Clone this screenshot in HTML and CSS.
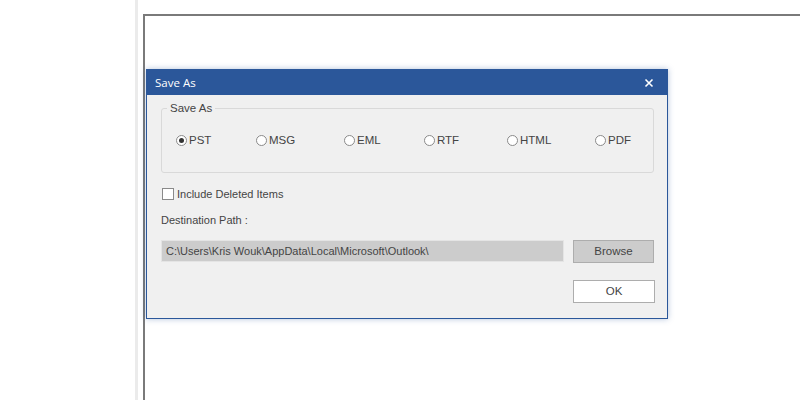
FILE: index.html
```html
<!DOCTYPE html>
<html>
<head>
<meta charset="utf-8">
<link rel="stylesheet" href="styles.css">
</head>
<body>
<div class="page">
  <div class="sidebar"></div>
  <div class="divider"></div>
  <div class="gap"></div>
  <div class="canvas">
    <div class="dialog">
      <div class="titlebar">
        <span class="title">Save As</span>
        <svg class="close" width="10" height="10" viewBox="0 0 10 10"><path d="M1.5 1.5 L8.5 8.5 M8.5 1.5 L1.5 8.5" stroke="#fff" stroke-width="1.6" fill="none"/></svg>
      </div>
      <div class="body">
        <fieldset class="group">
          <legend>Save As</legend>
          <div class="radios">
            <label class="radio r1"><span class="dot on"></span>PST</label>
            <label class="radio r2"><span class="dot"></span>MSG</label>
            <label class="radio r3"><span class="dot"></span>EML</label>
            <label class="radio r4"><span class="dot"></span>RTF</label>
            <label class="radio r5"><span class="dot"></span>HTML</label>
            <label class="radio r6"><span class="dot"></span>PDF</label>
          </div>
        </fieldset>
        <label class="check"><span class="box"></span>Include Deleted Items</label>
        <div class="dest">Destination Path :</div>
        <div class="pathrow">
          <div class="path">C:\Users\Kris Wouk\AppData\Local\Microsoft\Outlook\</div>
          <div class="btn browse">Browse</div>
        </div>
        <div class="okrow">
          <div class="btn ok">OK</div>
        </div>
      </div>
    </div>
  </div>
</div>
</body>
</html>
```
FILE: styles.css
```css
html, body {
  margin: 0;
  padding: 0;
  width: 800px;
  height: 400px;
  overflow: hidden;
  background: #fff;
  font-family: "Liberation Sans", Arial, sans-serif;
}
.page {
  display: flex;
  height: 400px;
}
.sidebar {
  width: 135px;
  background: #fff;
}
.divider {
  width: 3px;
  background: #ebebeb;
}
.gap {
  width: 5px;
}
.canvas {
  flex: 1;
  margin-top: 14px;
  border-top: 2px solid #7a7a7a;
  border-left: 2px solid #7a7a7a;
  background: #fff;
  padding-top: 53px;
  padding-left: 1px;
}
.dialog {
  width: 520px;
  height: 248px;
  border: 1px solid #2b579a;
  background: #f0f0f0;
  box-shadow: 0 0 6px rgba(43, 87, 154, 0.35);
  display: flex;
  flex-direction: column;
}
.titlebar {
  height: 25px;
  background: #2b579a;
  display: flex;
  align-items: center;
  justify-content: space-between;
  padding: 0 13px 0 8px;
}
.title {
  color: #fff;
  font-family: "Open Sans", "Noto Sans", sans-serif;
  font-size: 11.5px;
}
.close {
  display: block;
}
.body {
  flex: 1;
  padding: 7px 11px 0 14px;
  color: #444;
  font-size: 11px;
}
.group {
  margin: 0;
  padding: 0;
  height: 71px;
  border: 1px solid #d9d9d9;
  border-radius: 3px;
  width: 493px;
  box-sizing: border-box;
}
.group legend {
  padding: 0 3px;
  margin-left: 5px;
  color: #444;
  font-size: 11.5px;
}
.radios {
  display: flex;
  padding: 20px 0 0 14px;
}
.radio {
  display: flex;
  align-items: center;
  color: #444;
  font-size: 11.5px;
}
.r1 { width: 80px; }
.r2 { width: 88px; }
.r3 { width: 80px; }
.r4 { width: 83px; }
.r5 { width: 88px; }
.dot {
  width: 9px;
  height: 9px;
  border: 1px solid #8a8a8a;
  border-radius: 50%;
  background: #fff;
  margin-right: 2px;
  position: relative;
  box-sizing: content-box;
}
.dot.on::after {
  content: "";
  position: absolute;
  left: 2px;
  top: 2px;
  width: 5px;
  height: 5px;
  border-radius: 50%;
  background: #333;
}
.check {
  display: flex;
  align-items: center;
  margin-top: 15px;
  margin-left: 1px;
  color: #444;
}
.box {
  width: 10px;
  height: 10px;
  border: 1px solid #8a8a8a;
  background: #fff;
  margin-right: 3px;
}
.dest {
  margin-top: 14px;
  color: #444;
}
.pathrow {
  display: flex;
  margin-top: 14px;
  gap: 9px;
}
.path {
  width: 397px;
  height: 20px;
  border: 1px solid #e4e4e4;
  background: #cccccc;
  color: #444;
  line-height: 20px;
  padding-left: 4px;
}
.btn {
  width: 79px;
  height: 21px;
  border: 1px solid #adadad;
  text-align: center;
  line-height: 21px;
  color: #444;
  font-size: 11.5px;
}
.browse {
  background: #cccccc;
}
.okrow {
  display: flex;
  justify-content: flex-end;
  margin-top: 17px;
  padding-right: 1px;
}
.ok {
  width: 80px;
  background: #fff;
}
```
